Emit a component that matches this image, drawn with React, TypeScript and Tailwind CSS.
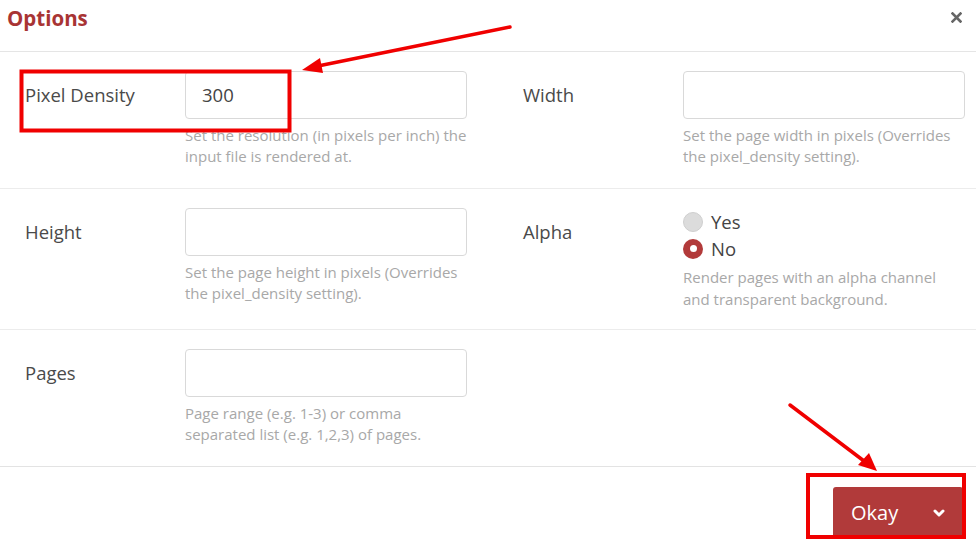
import React from "react";

const font = { fontFamily: '"Open Sans", "Liberation Sans", sans-serif' };

function TextField({ value }: { value?: string }) {
    return (
        <div className="h-[48px] w-[282px] rounded-[4px] border border-[#d9d9d9] bg-white px-[16px] flex items-center text-[18.5px] text-[#444]">
            {value}
        </div>
    );
}

function Help({ children }: { children: React.ReactNode }) {
    return <p className="mt-[6px] w-[282px] text-[15px] leading-[21px] text-[#a8a8a8]">{children}</p>;
}

function Field({ label, children, pl }: { label: string; children: React.ReactNode; pl: string }) {
    return (
        <div className={`flex ${pl}`}>
            <div className="w-[160px] h-[48px] flex items-center text-[18.5px] text-[#4a4a4a]">{label}</div>
            <div>{children}</div>
        </div>
    );
}

function Radio({ checked, label }: { checked?: boolean; label: string }) {
    return (
        <div className="flex items-center h-[27px] gap-[8px]">
            {checked ? (
                <span className="w-[20px] h-[20px] rounded-full bg-[#b23a3a] flex items-center justify-center">
                    <span className="w-[7px] h-[7px] rounded-full bg-white" />
                </span>
            ) : (
                <span className="w-[20px] h-[20px] rounded-full bg-[#dcdcdc] border border-[#cfcfcf]" />
            )}
            <span className="text-[18.5px] text-[#444]">{label}</span>
        </div>
    );
}

export default function App() {
    return (
        <div className="relative w-[976px] h-[547px] bg-white overflow-hidden" style={font}>
            {/* header */}
            <div className="h-[52px] border-b border-[#e5e5e5] flex items-start justify-between">
                <h1 className="ml-[7px] mt-[3px] text-[20.5px] font-bold text-[#a83434]">Options</h1>
                <svg className="mt-[12px] mr-[14px]" width="11" height="11" viewBox="0 0 11 11">
                    <path d="M1.5 1.5 L9.5 9.5 M9.5 1.5 L1.5 9.5" stroke="#666" strokeWidth="2.6" strokeLinecap="square" />
                </svg>
            </div>

            {/* row 1 */}
            <div className="grid grid-cols-[498px_478px] h-[137px] border-b border-[#ececec] pt-[19px]">
                <Field label="Pixel Density" pl="pl-[25px]">
                    <TextField value="300" />
                    <Help>Set the resolution (in pixels per inch) the input file is rendered at.</Help>
                </Field>
                <Field label="Width" pl="pl-[25px]">
                    <TextField />
                    <Help>Set the page width in pixels (Overrides the pixel_density setting).</Help>
                </Field>
            </div>

            {/* row 2 */}
            <div className="grid grid-cols-[498px_478px] h-[141px] border-b border-[#ececec] pt-[19px]">
                <Field label="Height" pl="pl-[25px]">
                    <TextField />
                    <Help>Set the page height in pixels (Overrides the pixel_density setting).</Help>
                </Field>
                <Field label="Alpha" pl="pl-[25px]">
                    <div>
                        <Radio label="Yes" />
                        <Radio checked label="No" />
                    </div>
                    <p className="mt-[4px] w-[282px] text-[15px] leading-[22px] text-[#a8a8a8]">
                        Render pages with an alpha channel and transparent background.
                    </p>
                </Field>
            </div>

            {/* row 3 */}
            <div className="grid grid-cols-[498px_478px] h-[137px] border-b border-[#e3e3e3] pt-[19px]">
                <Field label="Pages" pl="pl-[25px]">
                    <TextField />
                    <Help>Page range (e.g. 1-3) or comma separated list (e.g. 1,2,3) of pages.</Help>
                </Field>
                <div />
            </div>

            {/* footer */}
            <div className="flex justify-end pt-[20px] pr-[13px]">
                <button className="h-[52px] w-[130px] rounded-[3px] bg-[#b13a3a] text-white text-[20px] flex items-center pl-[18px] pr-[18px] justify-between">
                    <span>Okay</span>
                    <svg width="12" height="9" viewBox="0 0 12 9">
                        <path d="M2 2 L6 6 L10 2" stroke="white" strokeWidth="3" fill="none" strokeLinecap="round" strokeLinejoin="round" />
                    </svg>
                </button>
            </div>

            {/* annotations */}
            <svg className="absolute inset-0 pointer-events-none" width="976" height="547">
                <rect x="21.5" y="71.5" width="268" height="59" fill="none" stroke="#f00000" strokeWidth="4" />
                <rect x="808" y="475" width="156" height="62" fill="none" stroke="#f00000" strokeWidth="4" />
                <line x1="510" y1="27" x2="318" y2="66" stroke="#f00000" strokeWidth="3.5" strokeLinecap="round" />
                <polygon points="302,70 320,58 323,73" fill="#f00000" />
                <line x1="790" y1="405" x2="864" y2="461" stroke="#f00000" strokeWidth="3.5" strokeLinecap="round" />
                <polygon points="877,471 858,465 869,453" fill="#f00000" />
            </svg>
        </div>
    );
}
